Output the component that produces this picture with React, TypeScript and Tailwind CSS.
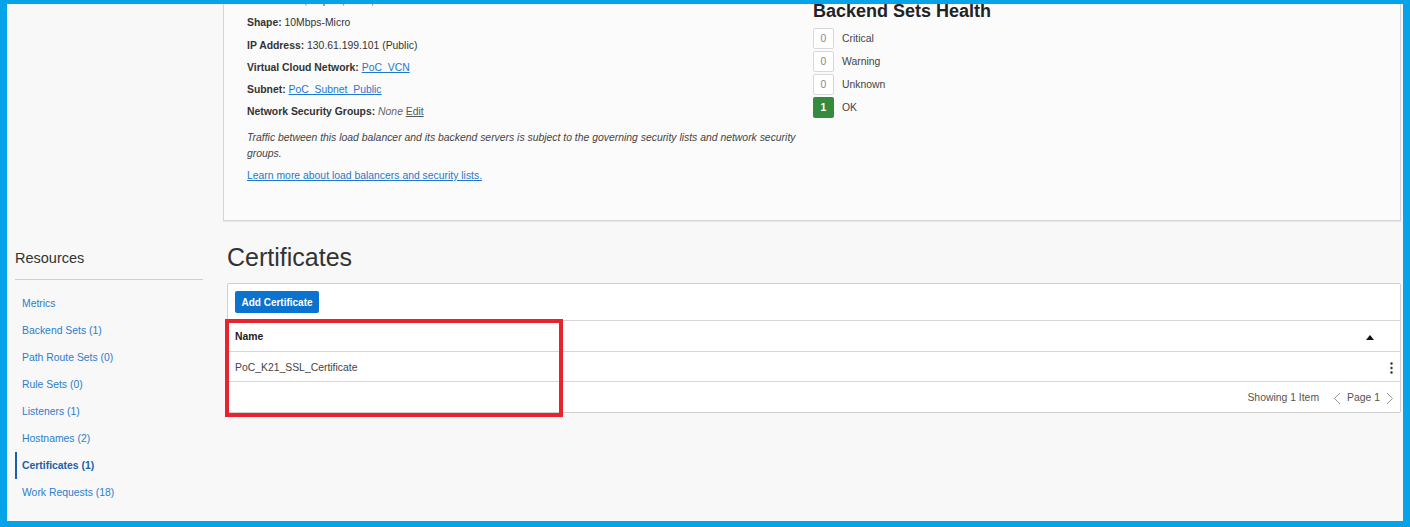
import React from "react";

const navItems = [
  "Metrics",
  "Backend Sets (1)",
  "Path Route Sets (0)",
  "Rule Sets (0)",
  "Listeners (1)",
  "Hostnames (2)",
  "Certificates (1)",
  "Work Requests (18)",
];

const health = [
  { n: "0", label: "Critical", ok: false },
  { n: "0", label: "Warning", ok: false },
  { n: "0", label: "Unknown", ok: false },
  { n: "1", label: "OK", ok: true },
];

export default function App() {
  return (
    <div className="w-[1410px] h-[527px] border-[#06a3e9] border-l-[7px] border-r-[7px] border-t-[4px] border-b-[6px] font-['Liberation_Sans',Arial,sans-serif] text-[#333]">
      <div className="w-full h-full bg-[#f8f8f8] overflow-hidden grid grid-cols-[216px_1fr] grid-rows-[217px_1fr]">
        {/* top row */}
        <div />
        <div className="mr-[2px] -mt-[14px] h-[231px] bg-[#fbfbfb] border border-t-0 border-[#d4d7da] shadow-[0_1px_1px_rgba(0,0,0,0.06)] flex">
          <div className="w-[589px] pl-[23px] pr-[6px] text-[10.4px]">
            <div className="leading-[22.3px]">
              <span className="font-bold">Created:</span> Fri, Sep 11, 2020, 10:15:22 UTC
            </div>
            <div className="leading-[22.3px]">
              <span className="font-bold">Shape:</span> 10Mbps-Micro
            </div>
            <div className="leading-[22.3px]">
              <span className="font-bold">IP Address:</span> 130.61.199.101 (Public)
            </div>
            <div className="leading-[22.3px]">
              <span className="font-bold">Virtual Cloud Network:</span>{" "}
              <span className="text-[#1e78cf] underline">PoC_VCN</span>
            </div>
            <div className="leading-[22.3px]">
              <span className="font-bold">Subnet:</span>{" "}
              <span className="text-[#1e78cf] underline">PoC_Subnet_Public</span>
            </div>
            <div className="leading-[22.3px]">
              <span className="font-bold">Network Security Groups:</span>{" "}
              <span className="italic text-[#666]">None</span>{" "}
              <span className="underline text-[#555]">Edit</span>
            </div>
            <p className="mt-[6px] leading-[16px] italic text-[#444]">
              Traffic between this load balancer and its backend servers is subject to the governing security lists and network security groups.
            </p>
            <div className="mt-[6px] leading-[16px]">
              <span className="text-[#1e78cf] underline">Learn more about load balancers and security lists.</span>
            </div>
          </div>
          <div className="pt-[10px]">
            <div className="text-[18px] leading-[22px] font-bold text-[#222]">Backend Sets Health</div>
            <div className="mt-[6px] flex flex-col gap-[2px]">
              {health.map((h) => (
                <div key={h.label} className="flex items-center h-[21px]">
                  <div
                    className={
                      h.ok
                        ? "w-[21px] h-[21px] rounded-[2px] bg-[#358a3b] text-white font-bold text-[10.4px] flex items-center justify-center"
                        : "w-[21px] h-[21px] rounded-[2px] bg-white border border-[#d8d8d8] text-[#888] text-[10.4px] flex items-center justify-center"
                    }
                  >
                    {h.n}
                  </div>
                  <span className="ml-[8px] text-[10.4px] text-[#444]">{h.label}</span>
                </div>
              ))}
            </div>
          </div>
        </div>

        {/* bottom row: sidebar */}
        <div className="pl-[8px] pt-[27px]">
          <div className="w-[188px]">
            <div className="text-[14.5px] leading-[20px] text-[#333]">Resources</div>
            <div className="mt-[11px] h-px bg-[#cfcfcf]" />
            <div className="mt-[10px] flex flex-col">
              {navItems.map((item) => {
                const active = item === "Certificates (1)";
                return (
                  <div
                    key={item}
                    className={
                      active
                        ? "h-[27px] flex items-center pl-[5px] border-l-2 border-[#1b5fa8] text-[10.4px] font-bold text-[#1b5fa8]"
                        : "h-[27px] flex items-center pl-[7px] text-[10.4px] text-[#2a7dcf]"
                    }
                  >
                    {item}
                  </div>
                );
              })}
            </div>
          </div>
        </div>

        {/* bottom row: main */}
        <div className="pl-[4px] pt-[20px] mr-[2px]">
          <h1 className="text-[25px] leading-[32px] text-[#333]">Certificates</h1>
          <div className="relative mt-[10px]">
            <div className="bg-white border border-[#d0d0d0] rounded-[2px] text-[10.4px]">
              <div className="h-[37px] flex items-center px-[7px] border-b border-[#d6d6d6]">
                <button className="h-[22px] w-[84px] rounded-[2px] bg-[#0a72cf] text-white font-bold text-[10px]">
                  Add Certificate
                </button>
              </div>
              <div className="h-[31px] flex items-center pt-[2px] pl-[7px] pr-[26px] border-b border-[#d6d6d6]">
                <span className="font-bold text-[#222]">Name</span>
                <svg className="ml-auto" width="8" height="5" viewBox="0 0 8 5">
                  <path d="M0 5 L4 0 L8 5 Z" fill="#111" />
                </svg>
              </div>
              <div className="h-[30px] flex items-center pt-[2px] pl-[7px] pr-[7px] border-b border-[#d6d6d6]">
                <span className="text-[#444]">PoC_K21_SSL_Certificate</span>
                <svg className="ml-auto" width="3" height="12" viewBox="0 0 3 12">
                  <circle cx="1.5" cy="1.5" r="1.2" fill="#333" />
                  <circle cx="1.5" cy="6" r="1.2" fill="#333" />
                  <circle cx="1.5" cy="10.5" r="1.2" fill="#333" />
                </svg>
              </div>
              <div className="h-[30px] flex items-center justify-end pt-[2px] pr-[6px] text-[#555]">
                <span>Showing 1 Item</span>
                <svg className="ml-[14px]" width="8" height="13" viewBox="0 0 8 13">
                  <path d="M7 1 L1.5 6.5 L7 12" stroke="#999" strokeWidth="1" fill="none" />
                </svg>
                <span className="ml-[6px]">Page 1</span>
                <svg className="ml-[6px]" width="8" height="13" viewBox="0 0 8 13">
                  <path d="M1 1 L6.5 6.5 L1 12" stroke="#999" strokeWidth="1" fill="none" />
                </svg>
              </div>
            </div>
            <div className="absolute left-[-2px] top-[36px] w-[338px] h-[98px] border-4 border-[#e8232d] pointer-events-none" />
          </div>
        </div>
      </div>
    </div>
  );
}
